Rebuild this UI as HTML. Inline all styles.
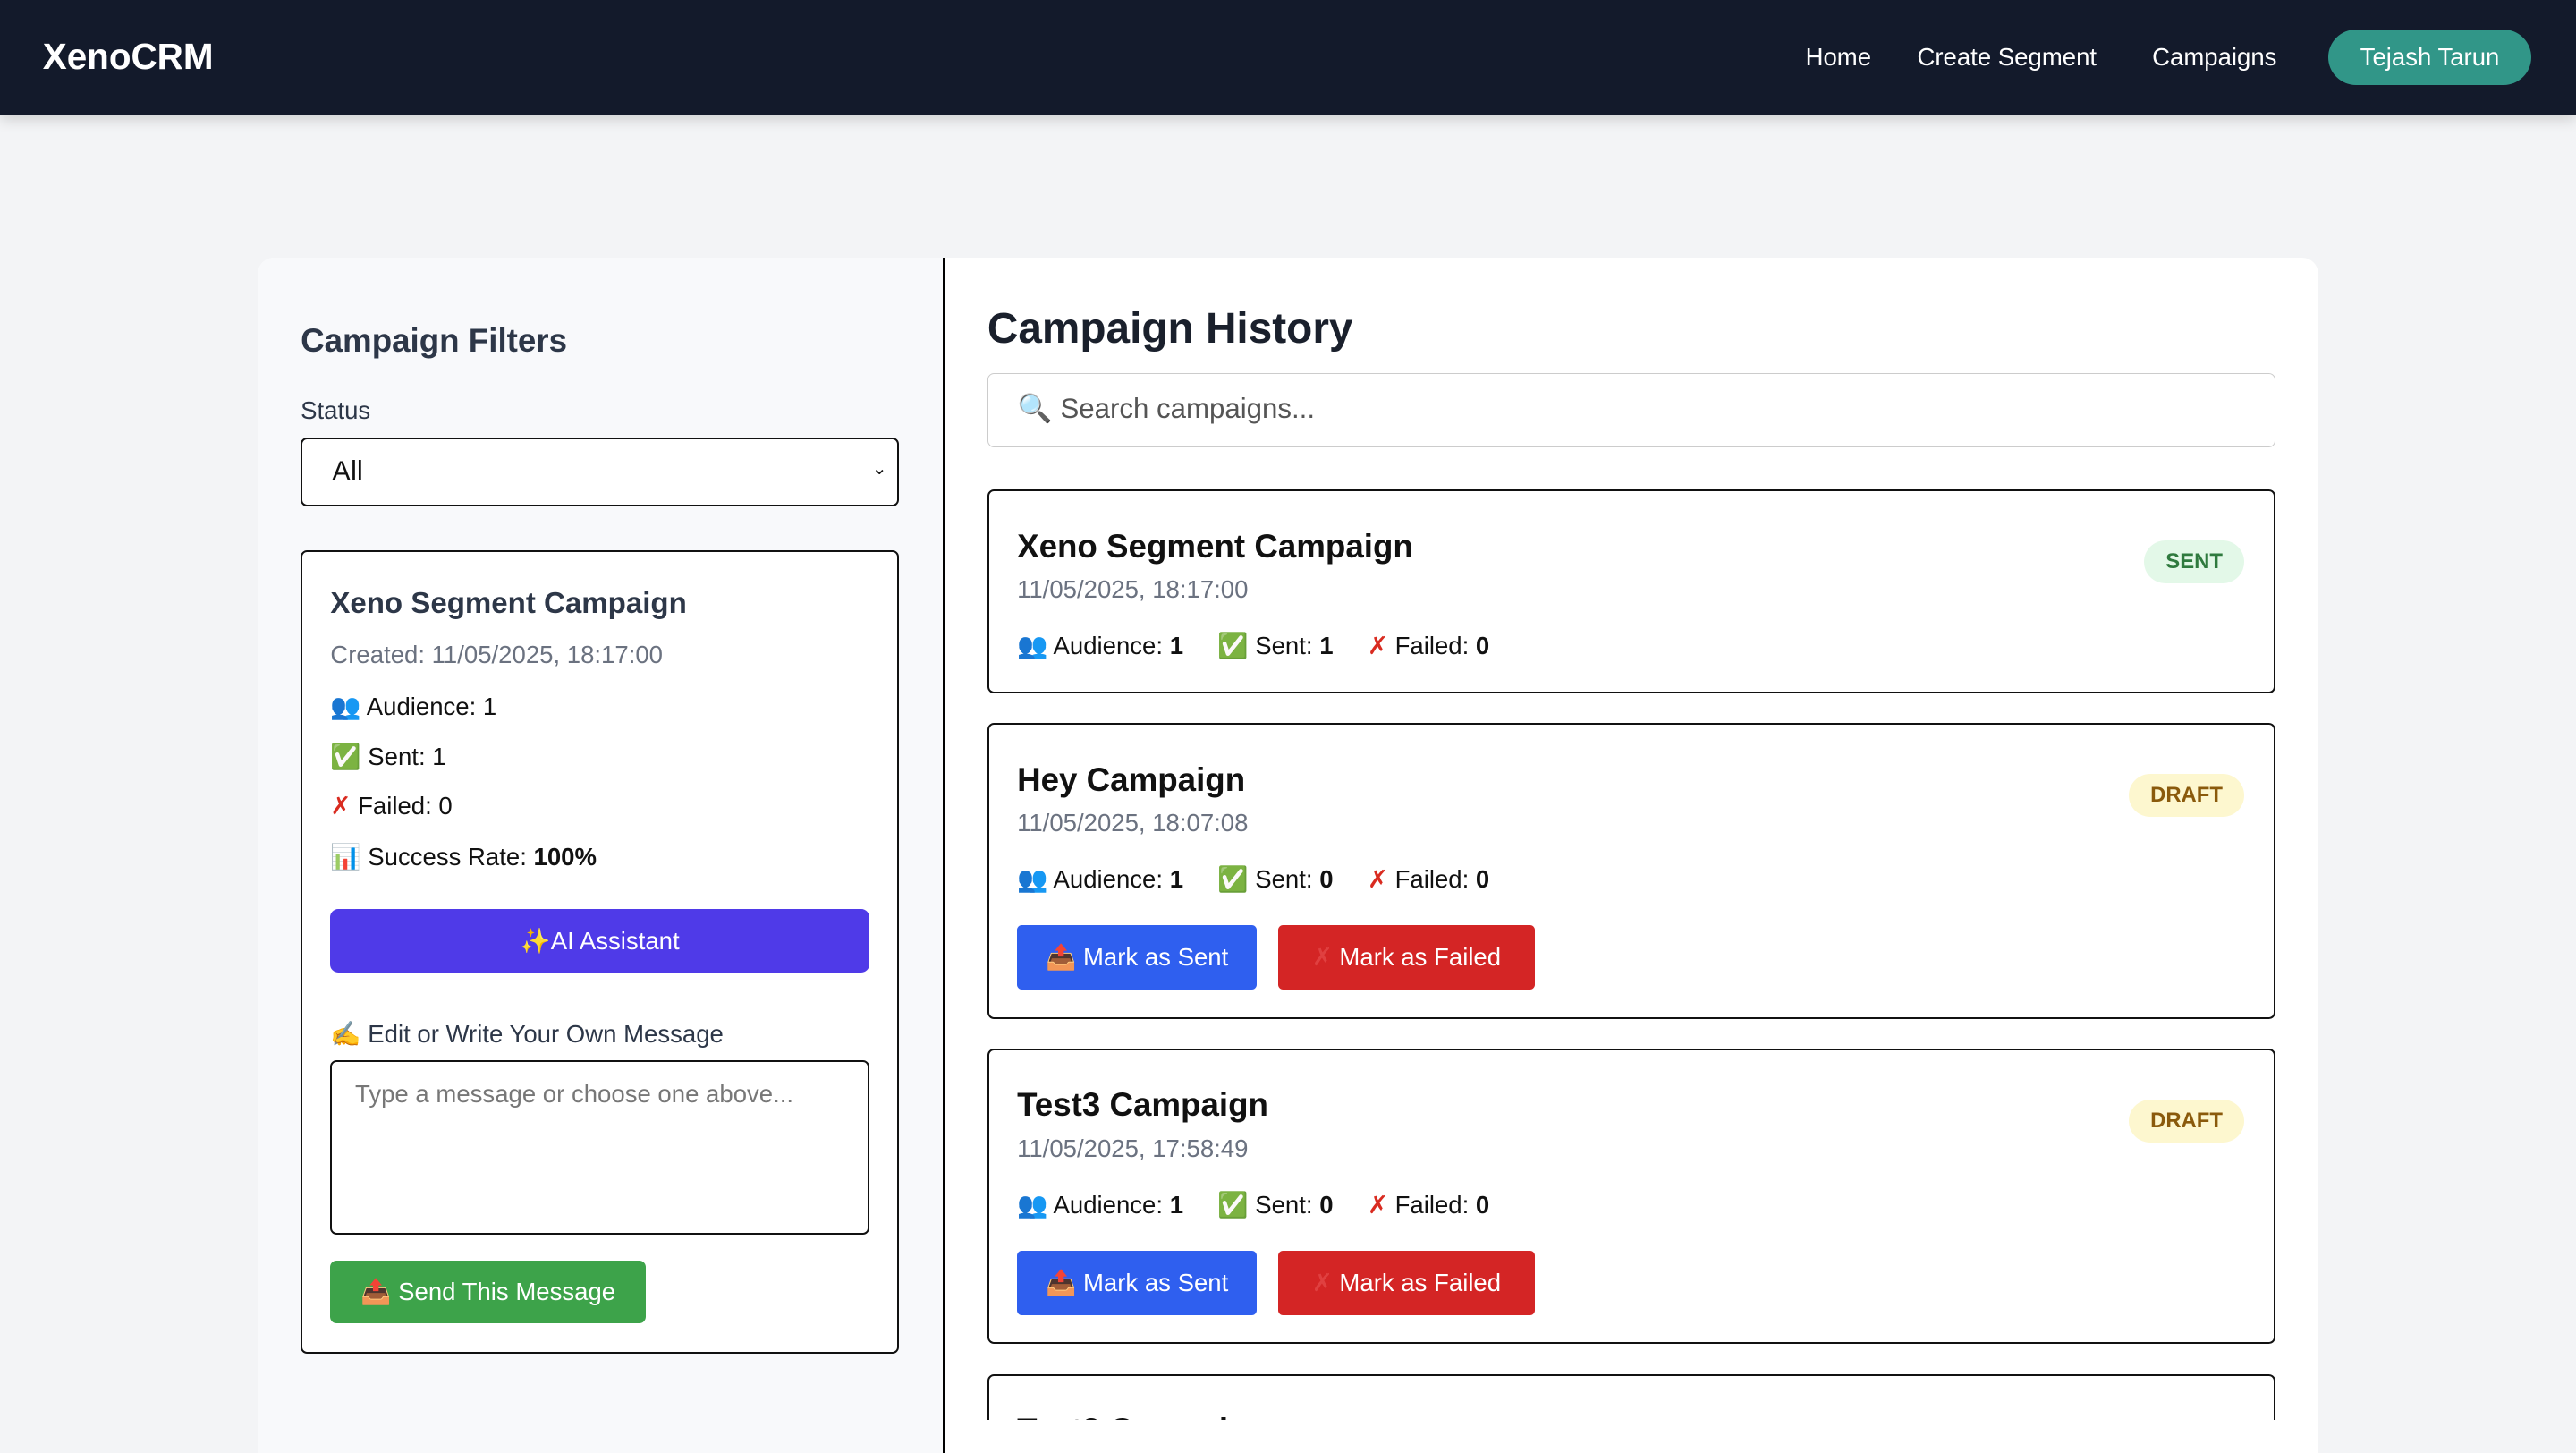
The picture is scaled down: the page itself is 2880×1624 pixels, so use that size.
<!DOCTYPE html>
<html><head><meta charset="utf-8"><style>
html{zoom:1.83674}
*{box-sizing:border-box;margin:0;padding:0}
body{width:1568px;height:884px;overflow:hidden;background:#f3f4f6;font-family:"Liberation Sans","DejaVu Sans",sans-serif;color:#111;position:relative}
.nav{position:absolute;left:0;top:0;width:1568px;height:70px;background:#131a2b;box-shadow:0 3px 8px rgba(0,0,0,.15)}
.nav .logo{position:absolute;left:26px;top:22px;color:#fff;font-weight:bold;font-size:22px}
.nav a{position:absolute;top:26px;color:#fff;font-size:15px}
.btnu{position:absolute;left:1417px;top:18px;width:124px;height:34px;border-radius:17px;background:#319688;color:#fff;font-size:15px;text-align:center;line-height:34px}
.wrap{position:absolute;left:157px;top:157px;width:1254px;height:727px;background:#fff;border-radius:10px 10px 0 0;overflow:hidden}
.left{position:absolute;left:0;top:0;width:418px;height:727px;background:#f8f9fb;border-right:1.5px solid #000}
.abs{position:absolute;white-space:nowrap}
.card{position:absolute;border:1.5px solid #111;border-radius:4px;background:#fff}
.gray{color:#6b7280}
.badge{position:absolute;right:18px;top:30px;height:26px;border-radius:13px;font-size:13px;font-weight:bold;line-height:26px;padding:0 13px}
.b{font-weight:bold}
.x{color:#d92b20;font-weight:bold}
.btn{position:absolute;height:39px;border-radius:3px;color:#fff;font-size:15px;line-height:39px;text-align:center}
</style></head><body>
<div class="nav"><div class="logo">XenoCRM</div>
<a style="left:1099px">Home</a><a style="left:1167px">Create Segment</a><a style="left:1310px">Campaigns</a>
<div class="btnu">Tejash Tarun</div></div>
<div class="wrap">
<div class="left">
<div class="abs" style="left:26px;top:39px;font-size:20px;font-weight:600;color:#2d3748">Campaign Filters</div>
<div class="abs" style="left:26px;top:84px;font-size:15px;color:#2d3748">Status</div>
<div class="abs" style="left:26px;top:109px;width:364px;height:42px;border:1.5px solid #111;border-radius:4px;background:#fff;font-size:17px;padding:10px 18px">All<span style="position:absolute;right:6px;top:11px;font-size:11px">&#8964;</span></div>
<div class="card" style="left:26px;top:178px;width:364px;height:489px">
<div class="abs" style="left:17px;top:21px;font-size:18px;font-weight:600;color:#2d3748">Xeno Segment Campaign</div>
<div class="abs gray" style="left:17px;top:54px;font-size:15px">Created: 11/05/2025, 18:17:00</div>
<div class="abs" style="left:17px;top:85px;font-size:15px">👥 Audience: 1</div>
<div class="abs" style="left:17px;top:115px;font-size:15px">✅ Sent: 1</div>
<div class="abs" style="left:17px;top:146px;font-size:15px"><span class="x">✗</span> Failed: 0</div>
<div class="abs" style="left:17px;top:176px;font-size:15px">📊 Success Rate: <b>100%</b></div>
<div class="btn" style="left:17px;top:217px;width:328px;background:#4f3ae8;border-radius:5px">✨AI Assistant</div>
<div class="abs" style="left:17px;top:284px;font-size:15px;color:#2d3748">✍️ Edit or Write Your Own Message</div>
<div class="abs" style="left:17px;top:309px;width:328px;height:106px;border:1.5px solid #111;border-radius:4px;padding:11px 14px;font-size:15px;color:#777">Type a message or choose one above...</div>
<div class="btn" style="left:17px;top:431px;width:192px;height:38px;background:#3da34a;border-radius:4px;line-height:38px">📤 Send This Message</div>
</div>
</div>
<div class="abs" style="left:444px;top:28px;font-size:26px;font-weight:bold;color:#1a202c">Campaign History</div>
<div class="abs" style="left:444px;top:70px;width:784px;height:45px;border:1px solid #ccc;border-radius:4px;font-size:17px;color:#555;padding:11px 18px">🔍 Search campaigns...</div>
<div class="card" style="left:444px;top:141px;width:784px;height:124px">
<div class="abs b" style="left:17px;top:22px;font-size:20px">Xeno Segment Campaign</div>
<div class="abs gray" style="left:17px;top:51px;font-size:15px">11/05/2025, 18:17:00</div>
<div class="abs" style="left:17px;top:85px;font-size:15px">👥 Audience: <b>1</b> &nbsp;&nbsp;&nbsp; ✅ Sent: <b>1</b> &nbsp;&nbsp;&nbsp; <span class="x">✗</span> Failed: <b>0</b></div>
<div class="badge" style="background:#e3f8e8;color:#2f7a3e">SENT</div>
</div>
<div class="card" style="left:444px;top:283px;width:784px;height:180px">
<div class="abs b" style="left:17px;top:22px;font-size:20px">Hey Campaign</div>
<div class="abs gray" style="left:17px;top:51px;font-size:15px">11/05/2025, 18:07:08</div>
<div class="abs" style="left:17px;top:85px;font-size:15px">👥 Audience: <b>1</b> &nbsp;&nbsp;&nbsp; ✅ Sent: <b>0</b> &nbsp;&nbsp;&nbsp; <span class="x">✗</span> Failed: <b>0</b></div>
<div class="badge" style="background:#fdf7cf;color:#8a5a0c">DRAFT</div>
<div class="btn" style="left:17px;top:122px;width:146px;background:#2f5fef">📤 Mark as Sent</div>
<div class="btn" style="left:176px;top:122px;width:156px;background:#d42525"><span style="color:#e04040">✗</span> Mark as Failed</div>
</div>
<div class="card" style="left:444px;top:481px;width:784px;height:180px">
<div class="abs b" style="left:17px;top:22px;font-size:20px">Test3 Campaign</div>
<div class="abs gray" style="left:17px;top:51px;font-size:15px">11/05/2025, 17:58:49</div>
<div class="abs" style="left:17px;top:85px;font-size:15px">👥 Audience: <b>1</b> &nbsp;&nbsp;&nbsp; ✅ Sent: <b>0</b> &nbsp;&nbsp;&nbsp; <span class="x">✗</span> Failed: <b>0</b></div>
<div class="badge" style="background:#fdf7cf;color:#8a5a0c">DRAFT</div>
<div class="btn" style="left:17px;top:122px;width:146px;background:#2f5fef">📤 Mark as Sent</div>
<div class="btn" style="left:176px;top:122px;width:156px;background:#d42525"><span style="color:#e04040">✗</span> Mark as Failed</div>
</div>
<div class="abs" style="left:444px;top:679px;width:784px;height:28px;overflow:hidden">
<div class="card" style="left:0;top:0;width:784px;height:180px"><div class="abs b" style="left:17px;top:22px;font-size:20px">Test2 Campaign</div></div></div>
</div>
</body></html>
